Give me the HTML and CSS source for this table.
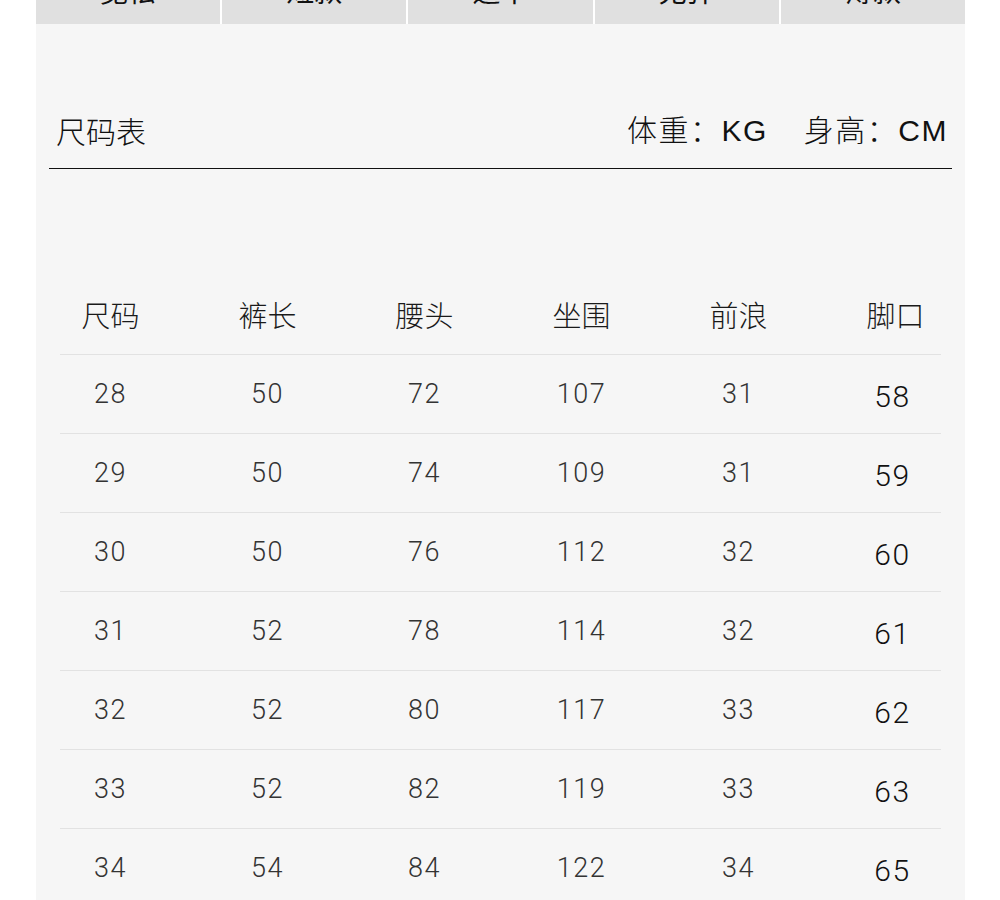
FILE: index.html
```html
<!DOCTYPE html>
<html lang="zh-CN">
<head>
<meta charset="utf-8">
<title>尺码表</title>
<link rel="stylesheet" href="styles.css">
</head>
<body>
<div class="page">
  <div class="tags">
    <div class="tag">宽松</div>
    <div class="tag">短款</div>
    <div class="tag">适中</div>
    <div class="tag">无弹</div>
    <div class="tag">薄款</div>
  </div>
  <div class="panel">
    <div class="title-row">
      <span class="title">尺码表</span>
      <span class="units"><span class="unit">体重：KG</span><span class="unit">身高：CM</span></span>
    </div>
    <div class="table">
      <div class="row head"><div class="cells">
        <span>尺码</span><span>裤长</span><span>腰头</span><span>坐围</span><span>前浪</span><span>脚口</span>
      </div></div>
      <div class="row"><div class="cells"><span>28</span><span>50</span><span>72</span><span>107</span><span>31</span><span>58</span></div></div>
      <div class="row"><div class="cells"><span>29</span><span>50</span><span>74</span><span>109</span><span>31</span><span>59</span></div></div>
      <div class="row"><div class="cells"><span>30</span><span>50</span><span>76</span><span>112</span><span>32</span><span>60</span></div></div>
      <div class="row"><div class="cells"><span>31</span><span>52</span><span>78</span><span>114</span><span>32</span><span>61</span></div></div>
      <div class="row"><div class="cells"><span>32</span><span>52</span><span>80</span><span>117</span><span>33</span><span>62</span></div></div>
      <div class="row"><div class="cells"><span>33</span><span>52</span><span>82</span><span>119</span><span>33</span><span>63</span></div></div>
      <div class="row"><div class="cells"><span>34</span><span>54</span><span>84</span><span>122</span><span>34</span><span>65</span></div></div>
    </div>
  </div>
</div>
</body>
</html>
```
FILE: styles.css
```css
html, body {
  margin: 0;
  padding: 0;
  background: #ffffff;
}
body {
  font-family: "Noto Sans CJK SC", "Liberation Sans", sans-serif;
  color: #1a1a1a;
  overflow: hidden;
}
.page {
  width: 929px;
  margin-left: 36px;
}
.tags {
  display: grid;
  grid-template-columns: repeat(5, 1fr);
  gap: 2px;
  margin-top: -36px;
}
.tag {
  height: 60px;
  background: #e0e0e0;
  box-sizing: border-box;
  padding-top: 10px;
  line-height: 32px;
  font-size: 28px;
  text-align: center;
  color: #111;
}
.panel {
  background: #f6f6f6;
  padding: 86px 13px 60px;
  min-height: 900px;
  box-sizing: border-box;
}
.title-row {
  display: flex;
  justify-content: space-between;
  align-items: center;
  height: 59px;
  box-sizing: border-box;
  padding: 0 4px 19px 7px;
  border-bottom: 1px solid #111;
  line-height: 40px;
}
.title {
  font-size: 30px;
  font-weight: 300;
  color: #111;
}
.units {
  display: flex;
  gap: 36px;
  font-family: "Liberation Sans", "Noto Sans CJK SC", sans-serif;
  font-size: 30px;
  font-weight: 300;
  letter-spacing: 1.5px;
  color: #111;
  padding-top: 2px;
}
.table {
  margin: 102px 11px 0;
}
.row {
  height: 79px;
  border-top: 1px solid #e2e2e2;
  box-sizing: border-box;
}
.row.head {
  height: 83px;
  border-top: none;
  padding-top: 22px;
}
.cells {
  display: grid;
  grid-template-columns: repeat(6, 157px);
  margin: 0 -33px 0 -28px;
  height: 100%;
  align-items: center;
  text-align: center;
  font-family: "Roboto", "Liberation Sans", sans-serif;
  font-weight: 300;
  font-size: 27px;
  color: #333;
  letter-spacing: 1.5px;
}
.row.head .cells {
  height: 40px;
  font-family: "Noto Sans CJK SC", sans-serif;
  font-size: 29px;
  font-weight: 300;
  color: #1a1a1a;
  letter-spacing: 0;
}
.row:not(.head) .cells span:last-child {
  font-size: 30px;
  color: #111;
  padding-top: 4px;
  padding-right: 6px;
}
```
